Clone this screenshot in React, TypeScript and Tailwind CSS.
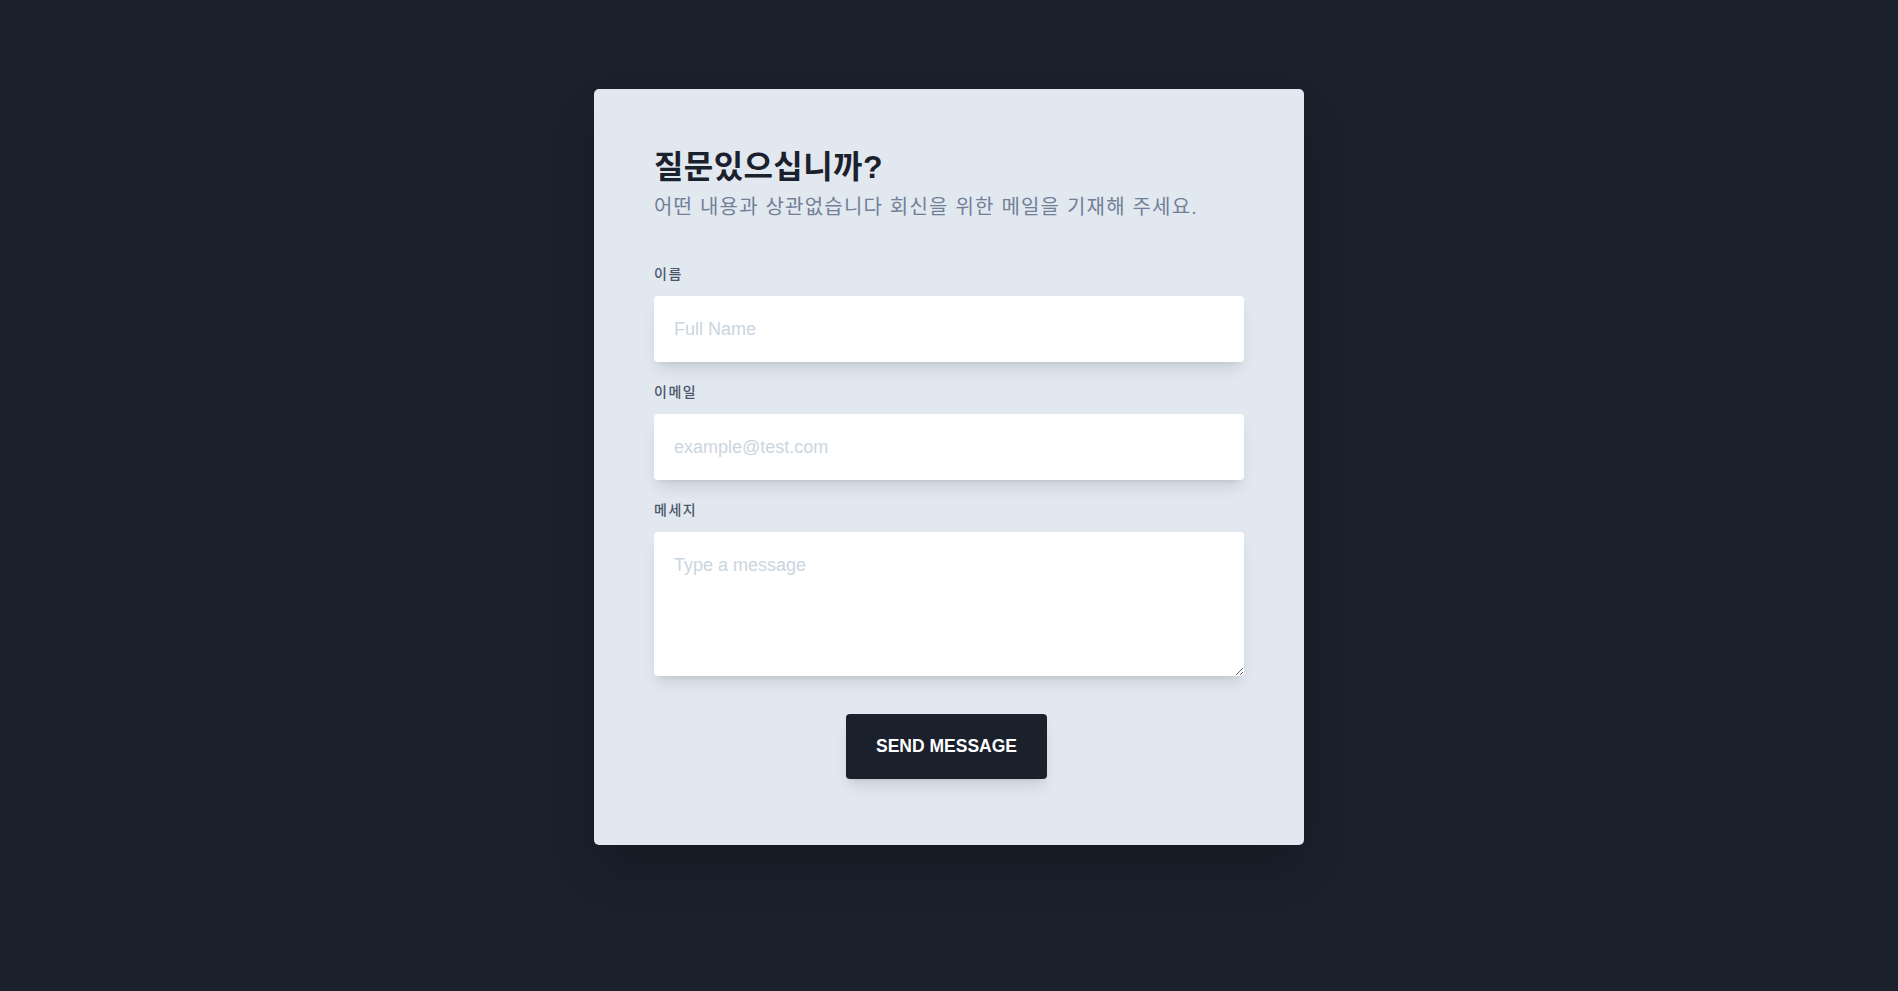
export default function App() {
    return (
        <div className="min-h-screen bg-[#1a202c] flex justify-center pt-[89px] font-['Liberation_Sans','Noto_Sans_CJK_KR',sans-serif]">
            <div className="w-[710px] self-start bg-[#e2e8f0] rounded-[5px] px-[60px] pt-[60px] pb-[66px] shadow-2xl">
                <h1 className="text-[32px] leading-9 font-bold tracking-[0.4px] text-[#1a202c]">질문있으십니까?</h1>
                <p className="mt-2 text-xl tracking-[1.2px] text-[#718096]">
                    어떤 내용과 상관없습니다 회신을 위한 메일을 기재해 주세요.
                </p>

                <form className="mt-[43px]" onSubmit={(e) => e.preventDefault()}>
                    <label className="block text-sm font-medium tracking-[1.5px] text-[#4a5568] mb-3">이름</label>
                    <input
                        type="text"
                        placeholder="Full Name"
                        className="block w-full h-[66px] px-5 text-lg text-[#1a202c] bg-white rounded shadow-lg outline-none placeholder:text-[#cbd5e0]"
                    />

                    <label className="block mt-5 text-sm font-medium tracking-[1.5px] text-[#4a5568] mb-3">이메일</label>
                    <input
                        type="email"
                        placeholder="example@test.com"
                        className="block w-full h-[66px] px-5 text-lg text-[#1a202c] bg-white rounded shadow-lg outline-none placeholder:text-[#cbd5e0]"
                    />

                    <label className="block mt-5 text-sm font-medium tracking-[1.5px] text-[#4a5568] mb-3">메세지</label>
                    <textarea
                        placeholder="Type a message"
                        className="block w-full h-[144px] px-5 py-[19px] text-lg text-[#1a202c] bg-white rounded shadow-lg outline-none placeholder:text-[#cbd5e0]"
                    />

                    <div className="flex justify-center mt-[38px] pr-[5px]">
                        <button
                            type="submit"
                            className="h-[65px] px-[30px] bg-[#1a202c] text-white text-[17.5px] font-bold rounded shadow-lg"
                        >
                            SEND MESSAGE
                        </button>
                    </div>
                </form>
            </div>
        </div>
    );
}
